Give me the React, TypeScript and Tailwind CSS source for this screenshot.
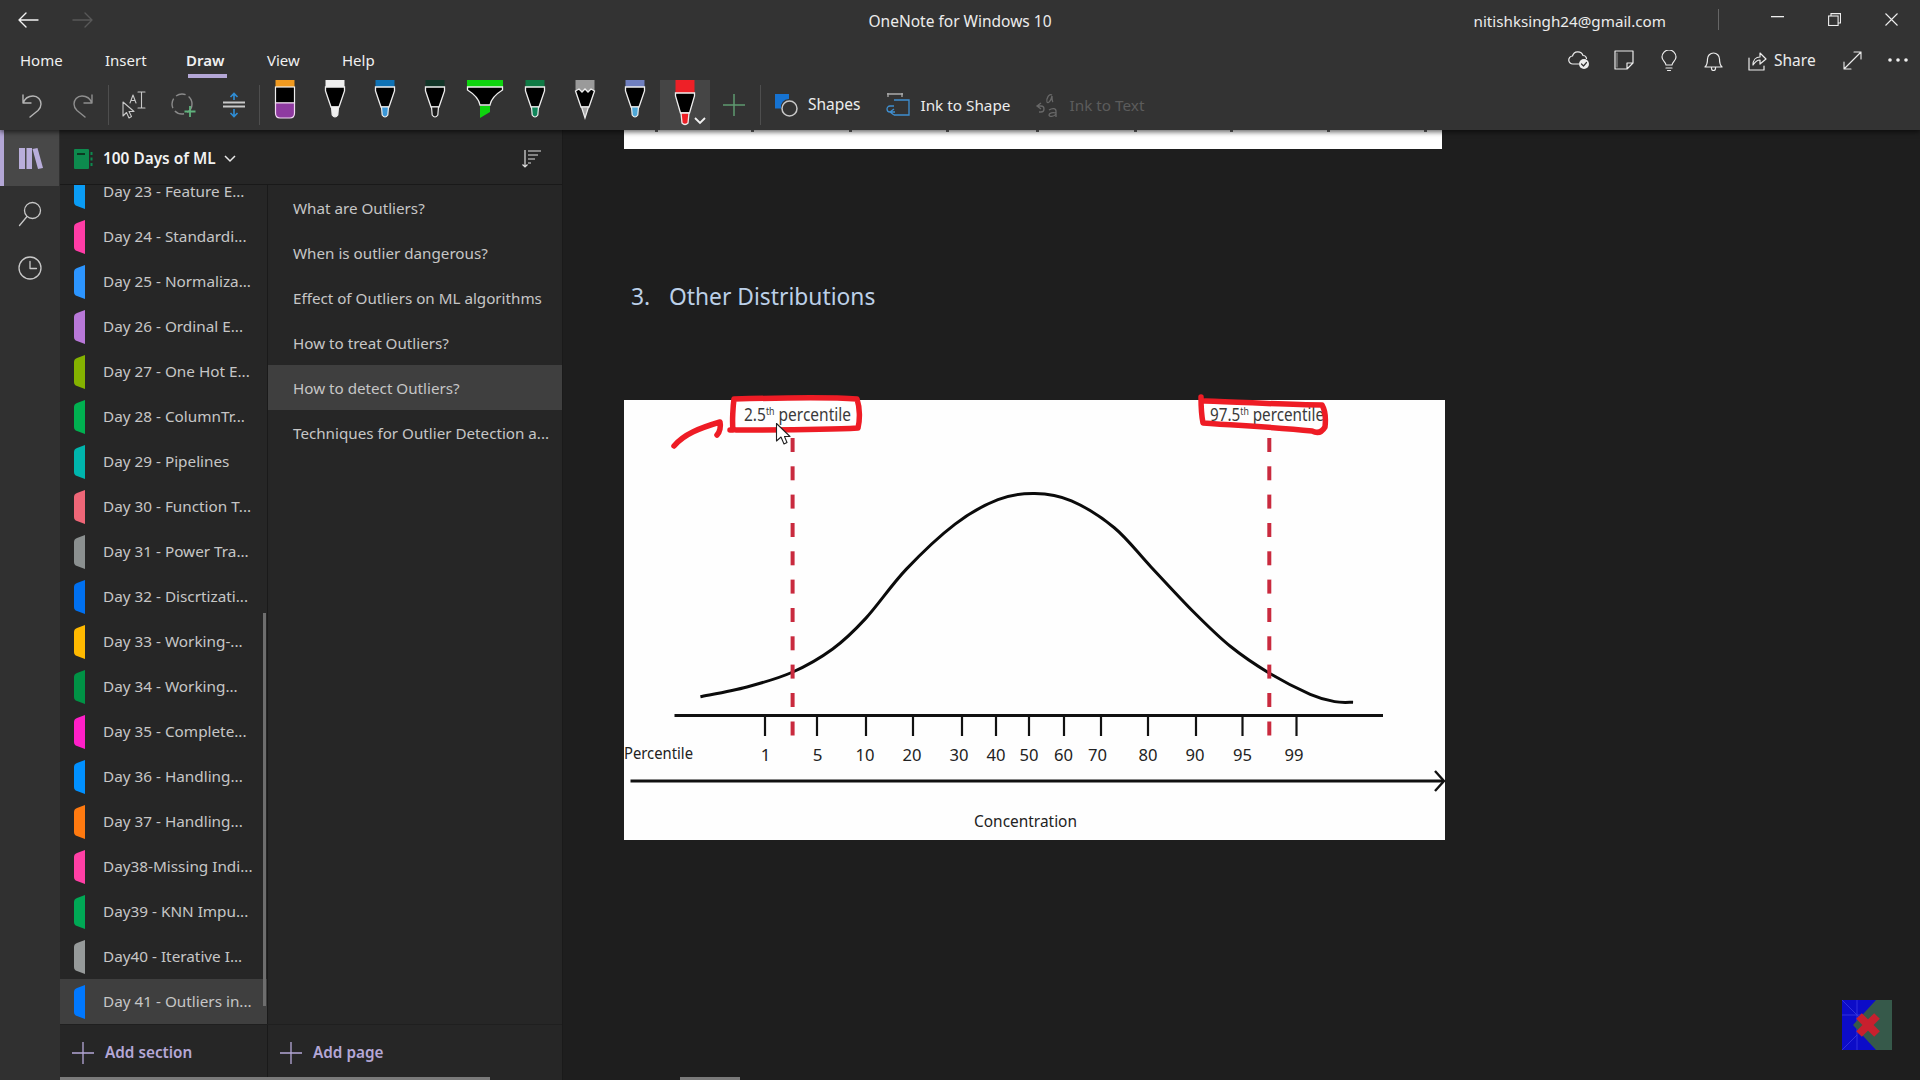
import React from "react";

const sections: [string, string][] = [
  ["Day 23 - Feature E...", "#0a9cf5"],
  ["Day 24 - Standardi...", "#ff3ca6"],
  ["Day 25 - Normaliza...", "#2c95ff"],
  ["Day 26 - Ordinal E...", "#b878d8"],
  ["Day 27 - One Hot E...", "#84b200"],
  ["Day 28 - ColumnTr...", "#00b050"],
  ["Day 29 - Pipelines", "#00b5ad"],
  ["Day 30 - Function T...", "#ee6677"],
  ["Day 31 - Power Tra...", "#8b9090"],
  ["Day 32 - Discrtizati...", "#0070f0"],
  ["Day 33 - Working-...", "#ffb900"],
  ["Day 34 - Working...", "#009245"],
  ["Day 35 - Complete...", "#ff1fc8"],
  ["Day 36 - Handling...", "#0090ff"],
  ["Day 37 - Handling...", "#ff7a10"],
  ["Day38-Missing Indi...", "#ff3fa5"],
  ["Day39 - KNN Impu...", "#00a855"],
  ["Day40 - Iterative I...", "#969a9a"],
  ["Day 41 - Outliers in...", "#0078ff"],
];

const pages = [
  "What are Outliers?",
  "When is outlier dangerous?",
  "Effect of Outliers on ML algorithms",
  "How to treat Outliers?",
  "How to detect Outliers?",
  "Techniques for Outlier Detection a...",
];

function smooth(p: number[][]) {
  let d = `M${p[0][0]} ${p[0][1]}`;
  for (let i = 0; i < p.length - 1; i++) {
    const a = p[Math.max(0, i - 1)], b = p[i], c = p[i + 1], e = p[Math.min(p.length - 1, i + 2)];
    d += ` C${b[0] + (c[0] - a[0]) / 6} ${b[1] + (c[1] - a[1]) / 6} ${c[0] - (e[0] - b[0]) / 6} ${c[1] - (e[1] - b[1]) / 6} ${c[0]} ${c[1]}`;
  }
  return d;
}

const curve = [
  [572, 569], [610, 561], [647, 549], [680, 530], [707, 505], [740, 465], [780, 428], [815, 408], [845, 403],
  [875, 409], [910, 431], [940, 463], [975, 500], [1005, 528], [1037, 550], [1070, 567], [1090, 573], [1105, 573.500],
].map(([x, y]) => [x * 1.2245 - 624, y * 1.2245 - 400]);

const ticks = [765, 817, 866, 913, 962, 996, 1029, 1064, 1101, 1148, 1196, 1242.5, 1296.5];
const labels: [string, number][] = [["1", 765.6], ["5", 817.5], ["10", 865], ["20", 912], ["30", 959], ["40", 996], ["50", 1029], ["60", 1063.6], ["70", 1097.5], ["80", 1148], ["90", 1195], ["95", 1242.5], ["99", 1294]];
const dashes = [38, 66.3, 94.6, 123, 151.3, 179.6, 208, 236.3, 264.6, 293, 321.5];

function Chart() {
  const font = "'Noto Sans', sans-serif";
  return (
    <svg width="821" height="440" viewBox="0 0 821 440" className="block overflow-visible">
      <rect x="0" y="0" width="821" height="440" fill="#fefefe" />
      <path d={smooth(curve)} fill="none" stroke="#0b0b0b" strokeWidth="3" />
      <line x1="50.5" y1="315.500" x2="759" y2="315.500" stroke="#111" strokeWidth="3" />
      {ticks.map((t) => (
        <line key={t} x1={t - 624} y1="315" x2={t - 624} y2="336" stroke="#111" strokeWidth="2.2" />
      ))}
      {[168.6, 645.3].map((x) =>
        dashes.map((d) => <line key={`${x}-${d}`} x1={x} y1={d} x2={x} y2={d + 14} stroke="#c92a3e" strokeWidth="4" />)
      )}
      {labels.map(([l, x]) => (
        <text key={l} x={x - 624} y="361" textAnchor="middle" fontFamily={font} fontSize="17" fill="#222" textLength={l.length === 2 ? 19 : undefined} lengthAdjust="spacingAndGlyphs">
          {l}
        </text>
      ))}
      <text x="0" y="359" fontFamily={font} fontSize="17" fill="#222" textLength="69" lengthAdjust="spacingAndGlyphs">Percentile</text>
      <text x="350" y="427" fontFamily={font} fontSize="17" fill="#222" textLength="103" lengthAdjust="spacingAndGlyphs">Concentration</text>
      <line x1="6.5" y1="381" x2="819" y2="381" stroke="#111" strokeWidth="2.8" />
      <path d="M811 371 L820 381 L811 391" fill="none" stroke="#111" strokeWidth="2.4" />
      <text x="120" y="21" fontFamily={font} fontSize="17.500" fill="#3a3a3a" textLength="107" lengthAdjust="spacingAndGlyphs">
        2.5<tspan fontSize="10" dy="-6">th</tspan><tspan dy="6"> percentile</tspan>
      </text>
      <text x="586" y="21" fontFamily={font} fontSize="17.500" fill="#3a3a3a" textLength="114" lengthAdjust="spacingAndGlyphs">
        97.5<tspan fontSize="10" dy="-6">th</tspan><tspan dy="6"> percentile</tspan>
      </text>
      <g fill="none" stroke="#ee1c25" strokeWidth="5.500" strokeLinecap="round" strokeLinejoin="round">
        <path d="M106 30 H109 C108 22 109 6 110 -1 C150 -2 205 -3 233 -1 C236 8 236 20 234 28 C200 30 150 30 112 30" />
        <path d="M50 46 C60 34 76 28 96 22 C97 26 96 32 93 35" />
        <path d="M577 -3 C577 8 578 18 579 23 C620 26 650 27 688 31 C694 34 698 32 701 27 C702 18 701 10 698 5 C660 5 620 2 581 1" />
      </g>
      <path d="M152.500 23.500 V41 L157 37 L160 44 L163 42.500 L160.500 36.500 H166 Z" fill="#fff" stroke="#222" strokeWidth="1.100" strokeLinejoin="round" />
    </svg>
  );
}

const s = { fill: "none", stroke: "currentColor", strokeWidth: 1.4, strokeLinecap: "round", strokeLinejoin: "round" } as const;

function Pen({ top, tip, kind = "pen" }: { top: string; tip: string; kind?: "pen" | "pencil" | "hl" | "marker" | "big" }) {
  let inner: React.ReactNode;
  if (kind === "marker") {
    inner = (
      <>
        <rect x="15.500" y="0" width="19" height="7" fill={top} />
        <rect x="15.500" y="7" width="19" height="16" fill="#000" stroke="#eee" strokeWidth="1.200" />
        <path d="M15.500 23 H34.500 V33 Q34.500 38 30 38 H20 Q15.500 38 15.500 33 Z" fill={tip} stroke="#f3d9f3" strokeWidth="1.200" />
      </>
    );
  } else if (kind === "hl") {
    inner = (
      <>
        <rect x="7" y="0" width="36" height="7" fill={top} />
        <path d="M7.500 7 H42.500 V10 C36 14 31 19 30 25 H20 C19 19 14 14 7.500 10 Z" fill="#000" stroke="#eee" strokeWidth="1.300" />
        <path d="M20 26 H30 V32 L20 38 Z" fill={tip} />
      </>
    );
  } else if (kind === "big") {
    inner = (
      <>
        <rect x="15.500" y="0" width="19" height="13" fill={top} />
        <path d="M15.500 13 H34.500 V16 L29.500 33 H20.500 L15.500 16 Z" fill="#000" stroke="#eee" strokeWidth="1.300" />
        <path d="M21 33 H29 L28 43 Q25 46 22 43 Z" fill={tip} stroke="#eee" strokeWidth="1.300" />
      </>
    );
  } else {
    inner = (
      <>
        <rect x="15.500" y="0" width="19" height="7" fill={top} />
        {kind === "pencil" ? <path d="M15.500 7 V11 L19 9 L22 12 L25 9 L28 12 L31 9 L34.500 11 V7 Z" fill={top} /> : null}
        <path
          d={kind === "pencil" ? "M15.500 11 L19 9 L22 12 L25 9 L28 12 L31 9 L34.500 11 L29 27 H21 Z" : "M15.500 7 H34.500 V11 L29 27 H21 L15.500 11 Z"}
          fill="#000"
          stroke="#eee"
          strokeWidth="1.300"
        />
        <path d={kind === "pencil" ? "M21.500 27 H28.500 L25 38 Z" : "M21.500 27 H28.500 L27.800 35 Q25 39 22.200 35 Z"} fill={tip} stroke="#eee" strokeWidth="1.200" />
      </>
    );
  }
  return (
    <svg width="50" height="50" viewBox="0 0 50 50" className="block shrink-0">
      {inner}
    </svg>
  );
}

function Tab({ color }: { color: string }) {
  return (
    <svg width="11" height="34" viewBox="0 0 11 34" className="shrink-0">
      <path d="M11 0 V34 L3 31 Q0 30 0 27 V7 Q0 4 3 3 Z" fill={color} />
    </svg>
  );
}

function Sep() {
  return <div className="w-px h-[40px] bg-[#4e4e4e] shrink-0" />;
}

export default function App() {
  return (
    <div className="relative w-[1920px] h-[1080px] overflow-hidden flex flex-col bg-[#1e1e1e] text-[#e8e8e8] font-['Noto_Sans',sans-serif]">
      <header className="relative z-10 h-[130px] shrink-0 bg-[#333333] shadow-[0_2px_5px_rgba(0,0,0,0.6)]">
        <div className="h-[40px] grid grid-cols-[1fr_auto_1fr] items-center">
          <div className="flex items-center pl-[17px] gap-[33px]">
            <svg width="22" height="18" viewBox="0 0 22 18" {...s} className="text-[#f2f2f2]"><path d="M21 9H2M9 2L2 9l7 7" /></svg>
            <svg width="22" height="18" viewBox="0 0 22 18" {...s} className="text-[#585858]"><path d="M1 9h19M13 2l7 7-7 7" /></svg>
          </div>
          <div className="text-[15.5px] text-[#ececec] pt-[3px]">OneNote for Windows 10</div>
          <div className="flex items-center justify-end">
            <span className="text-[15.2px] text-[#ececec] pt-[3px]">nitishksingh24@gmail.com</span>
            <div className="w-px h-[21px] bg-[#666] ml-[52px] mr-[30px]" />
            <div className="w-[57px] flex justify-center pb-[5px]"><svg width="13" height="2" className="text-[#eee]"><rect width="13" height="1.300" fill="currentColor" /></svg></div>
            <div className="w-[57px] flex justify-center pb-[1px]"><svg width="13" height="13" viewBox="0 0 13 13" fill="none" stroke="#eee" strokeWidth="1.100"><rect x="0.600" y="3" width="9.500" height="9.500" /><path d="M3 3V.6h9.500V10H10" /></svg></div>
            <div className="w-[57px] flex justify-center pb-[1px]"><svg width="13" height="13" viewBox="0 0 13 13" fill="none" stroke="#eee" strokeWidth="1.100"><path d="M.5.5l12 12M12.500.5l-12 12" /></svg></div>
          </div>
        </div>

        <div className="h-[40px] flex items-center justify-between">
          <nav className="flex items-center pl-[20px] text-[15px] text-[#f0f0f0]">
            <div className="w-[85px]">Home</div>
            <div className="w-[81px]">Insert</div>
            <div className="w-[81px] relative font-semibold">
              Draw
              <div className="absolute left-[2px] top-[25px] w-[39px] h-[4px] bg-[#b4a7d6]" />
            </div>
            <div className="w-[75px]">View</div>
            <div>Help</div>
          </nav>
          <div className="flex items-center text-[#ececec]">
            <div className="w-[45px] flex justify-center">
              <svg width="22" height="20" viewBox="0 0 22 20" {...s} strokeWidth={1.2}>
                <path d="M12 14H5a4 4 0 0 1-.5-8A5.500 5.500 0 0 1 15 5.500a3.500 3.500 0 0 1 3.500 3" />
                <circle cx="16" cy="14" r="5" fill="#ececec" stroke="none" />
                <path d="M13.500 14l2 2 3-3.500" stroke="#333" />
              </svg>
            </div>
            <div className="w-[45px] flex justify-center">
              <svg width="20" height="20" viewBox="0 0 20 20" {...s} strokeWidth={1.2}>
                <path d="M1 1h18v12l-6 6H1zM19 13h-6v6" />
                <path d="M3 3v14" opacity="0.500" />
              </svg>
            </div>
            <div className="w-[45px] flex justify-center">
              <svg width="16" height="21" viewBox="0 0 16 21" {...s} strokeWidth={1.2}>
                <path d="M5 15c0-3-4-4-4-8a7 7 0 0 1 14 0c0 4-4 5-4 8zM5 18h6M6.500 20.500h3" />
              </svg>
            </div>
            <div className="w-[45px] flex justify-center">
              <svg width="19" height="21" viewBox="0 0 19 21" {...s} strokeWidth={1.2}>
                <path d="M1 17c2-2 2.500-4 2.500-8a6 6 0 0 1 12 0c0 4 .5 6 2.500 8zM7.500 17.500v1a2 2 0 0 0 4 0v-1" />
              </svg>
            </div>
            <div className="w-[94px] flex items-center pl-[12px]">
              <svg width="19" height="21" viewBox="0 0 19 21" {...s} strokeWidth={1.2}>
                <path d="M1 8v12h15v-4M5 15c0-5 3-8 7-8V3l6 6-6 5v-4c-3 0-5 2-7 5z" />
              </svg>
              <span className="ml-[7px] text-[15.5px] pt-[1px]">Share</span>
            </div>
            <div className="w-[45px] flex justify-center">
              <svg width="19" height="19" viewBox="0 0 19 19" {...s} strokeWidth={1.1}>
                <path d="M1 18L18 1M11 1h7v7M1 11v7h7" />
              </svg>
            </div>
            <div className="w-[45px] flex justify-center">
              <svg width="20" height="4" viewBox="0 0 20 4" fill="#f0f0f0"><circle cx="2" cy="2" r="1.800" /><circle cx="10" cy="2" r="1.800" /><circle cx="18" cy="2" r="1.800" /></svg>
            </div>
          </div>
        </div>

        <div className="h-[50px] flex items-center pl-[7px]">
          <div className="w-[50px] flex justify-center text-[#b5b5b5]">
            <svg width="22" height="25" viewBox="0 0 22 25" {...s}><path d="M2 2v8h8M2 10c2-5 6-7 10-7 5 0 8 4 8 8 0 3-1.500 5-3 6.500L9 24" /></svg>
          </div>
          <div className="w-[51px] flex justify-center text-[#8f8f8f]">
            <svg width="22" height="25" viewBox="0 0 22 25" {...s}><path d="M20 2v8h-8M20 10c-2-5-6-7-10-7-5 0-8 4-8 8 0 3 1.500 5 3 6.500L13 24" /></svg>
          </div>
          <Sep />
          <div className="w-[50px] flex justify-center text-[#c8c8c8]">
            <svg width="26" height="28" viewBox="0 0 26 28" {...s} strokeWidth={1.1}>
              <path d="M2 11v14l3.500-3.500L8 27l2.500-1.500L8 20.500h5z" />
              <path d="M9 12l3-8 3 8M10 9.500h4" />
              <path d="M17 1h7M17 17h7M20.500 1v16" />
            </svg>
          </div>
          <div className="w-[50px] flex justify-center">
            <svg width="26" height="26" viewBox="0 0 26 26" fill="none">
              <circle cx="11" cy="12" r="10" stroke="#8a8a8a" strokeWidth="1.400" strokeDasharray="10 3.500" />
              <path d="M19 14v11M13.500 19.500h11" stroke="#5fb27c" strokeWidth="1.800" />
            </svg>
          </div>
          <div className="w-[50px] flex justify-center">
            <svg width="24" height="26" viewBox="0 0 24 26" fill="none">
              <path d="M1 10.500h22M1 14.500h22" stroke="#c8c8c8" strokeWidth="2" />
              <path d="M12 2v6M8.500 5L12 1.500 15.500 5M12 17v7M8.500 21L12 24.500 15.500 21" stroke="#2f8ed6" strokeWidth="1.600" />
            </svg>
          </div>
          <Sep />
          <div className="self-start flex">
            <Pen top="#f09a20" tip="#8e3aa0" kind="marker" />
            <Pen top="#efefef" tip="#efefef" />
            <Pen top="#0f72b5" tip="#3a97d8" />
            <Pen top="#123528" tip="#1a1a1a" />
            <Pen top="#0fd40f" tip="#0fd40f" kind="hl" />
            <Pen top="#0f7a45" tip="#10855a" />
            <Pen top="#9a9a9a" tip="#aaaaaa" kind="pencil" />
            <Pen top="#6f7fc0" tip="#4fa8d8" />
            <div className="relative w-[50px] h-[50px] bg-[#454545]">
              <Pen top="#ee2027" tip="#ee2027" kind="big" />
              <svg width="12" height="8" viewBox="0 0 12 8" className="absolute left-[34px] top-[37px]" fill="none" stroke="#f2f2f2" strokeWidth="1.800"><path d="M1 1l5 5 5-5" /></svg>
            </div>
          </div>
          <div className="w-[48px] flex justify-center">
            <svg width="22" height="22" viewBox="0 0 22 22" stroke="#5f9a70" strokeWidth="1.500"><path d="M11 0v22M0 11h22" /></svg>
          </div>
          <div className="ml-[2px]"><Sep /></div>
          <div className="ml-[13px] flex items-center">
            <svg width="24" height="24" viewBox="0 0 24 24" fill="none">
              <path d="M1 1h14v5a8 8 0 0 0-8 9.500H1z" fill="#1673d2" />
              <circle cx="15.500" cy="15.500" r="7.500" stroke="#c8c8c8" strokeWidth="1.500" />
            </svg>
            <span className="ml-[10px] text-[15.5px] text-[#ececec]">Shapes</span>
          </div>
          <div className="ml-[26px] flex items-center">
            <svg width="24" height="26" viewBox="0 0 24 26" fill="none" strokeWidth="1.300">
              <path d="M1 2h16M2 1v4M16 1v4" stroke="#aaa" />
              <path d="M8 8h15v15H8" stroke="#3f8fd0" />
              <path d="M8 14H4a3 3 0 0 0 0 6h5M8 17l-4 3 4 3" stroke="#3f8fd0" />
            </svg>
            <span className="ml-[10px] text-[15.3px] text-[#ececec]">Ink to Shape</span>
          </div>
          <div className="ml-[24px] flex items-center">
            <svg width="24" height="26" viewBox="0 0 24 26" fill="none" stroke="#686868" strokeWidth="1.300">
              <path d="M17 3c-3-2-6 4-5 7 1 2 4-1 5-6 0 3 0 5 1 6" />
              <path d="M6 11l-4 3 4 3M2 14h4a2 2 0 0 1 0 6H4" />
              <path d="M14 18c3-2 7-2 7 1v6M21 21c-3-1-7 0-7 2s5 2 7-1" />
            </svg>
            <span className="ml-[11px] text-[15.3px] text-[#5c5c5c]">Ink to Text</span>
          </div>
        </div>
      </header>

      <main className="flex-1 flex min-h-0">
        <aside className="w-[60px] shrink-0 bg-[#303030] flex flex-col text-[#c8c8c8]">
          <div className="relative h-[56px] bg-[#484848] w-[59px] flex items-center justify-center border-l-[4px] border-[#b4a7d6] pr-[2px]">
            <svg width="24" height="21" viewBox="0 0 24 21" fill="#b9aedb"><rect x="0" y="0" width="6" height="21" /><rect x="7.500" y="0" width="5.500" height="21" /><path d="M13.500 1l5-1L24 20l-5 1z" /></svg>
          </div>
          <div className="h-[55px] flex items-center justify-center">
            <svg width="24" height="26" viewBox="0 0 24 26" {...s} strokeWidth={1.300}><circle cx="14.500" cy="9.500" r="8" /><path d="M9 15.500L1.500 24.500" /></svg>
          </div>
          <div className="h-[54px] flex items-center justify-center">
            <svg width="24" height="24" viewBox="0 0 24 24" {...s} strokeWidth={1.300}><circle cx="12" cy="12" r="11" /><path d="M12 5.500V12.500H18.500" /></svg>
          </div>
        </aside>

        <section className="relative w-[503px] shrink-0 flex flex-col bg-[#262626] border-r border-[#1a1a1a]">
          <div className="h-[55px] shrink-0 flex items-center border-b border-[#191919] pl-[13px] pr-[20px] pt-[4px]">
            <svg width="20" height="20" viewBox="0 0 20 20" className="shrink-0">
              <path d="M1 1a1 1 0 0 1 1-1h13a1 1 0 0 1 1 1v18a1 1 0 0 1-1 1H2a1 1 0 0 1-1-1z" fill="#0d8a4e" />
              <rect x="4" y="4" width="8" height="2" fill="#0c3a22" />
              <path d="M17.500 3h2v3h-2zM17.500 8.500h2v3h-2zM17.500 14h2v3h-2z" fill="#0d8a4e" />
            </svg>
            <span className="ml-[10px] text-[15.4px] font-semibold text-[#f2f2f2]">100 Days of ML</span>
            <svg width="12" height="8" viewBox="0 0 12 8" fill="none" stroke="#e8e8e8" strokeWidth="1.500" className="ml-[8px]"><path d="M1 1l5 5 5-5" /></svg>
            <svg width="20" height="20" viewBox="0 0 20 20" fill="none" stroke="#e0e0e0" strokeWidth="1.200" className="ml-auto"><path d="M3 1v17M.5 15.500L3 18l2.500-2.500M6 2h13M6 6h10M6 10h7M6 14h3" /></svg>
          </div>

          <div className="flex-1 min-h-0 flex">
            <div className="w-[208px] shrink-0 overflow-hidden border-r border-[#1a1a1a]">
              <div className="-mt-[16px]">
                {sections.map(([name, color], i) => (
                  <div key={name} className={`h-[45px] flex items-center pl-[14px] ${i === 18 ? "bg-[#3f3f3f]" : ""}`}>
                    <Tab color={color} />
                    <span className="ml-[18px] whitespace-nowrap text-[15.3px] text-[#c6c6c6]">{name}</span>
                  </div>
                ))}
              </div>
            </div>
            <div className="flex-1">
              {pages.map((p, i) => (
                <div key={p} className={`h-[45px] flex items-center pl-[25px] pt-[1px] whitespace-nowrap text-[15.2px] text-[#c6c6c6] ${i === 4 ? "bg-[#3f3f3f]" : ""}`}>
                  {p}
                </div>
              ))}
            </div>
          </div>

          <div className="h-[56px] shrink-0 flex text-[#b4a7d6] font-semibold text-[15.3px] border-t border-[#1f1f1f]">
            <div className="w-[208px] flex items-center pl-[12px] border-r border-[#1a1a1a]">
              <svg width="22" height="22" viewBox="0 0 22 22" stroke="#b4a7d6" strokeWidth="1.300"><path d="M11 0v22M0 11h22" /></svg>
              <span className="ml-[11px]">Add section</span>
            </div>
            <div className="flex-1 flex items-center pl-[12px]">
              <svg width="22" height="22" viewBox="0 0 22 22" stroke="#b4a7d6" strokeWidth="1.300"><path d="M11 0v22M0 11h22" /></svg>
              <span className="ml-[11px]">Add page</span>
            </div>
          </div>
        </section>

        <div className="relative flex-1 pl-[61px] min-w-0 bg-[#1e1e1e]">
          <div className="relative w-[818px] h-[19px] bg-white">
            <svg width="818" height="4" className="block">
              {[31, 127, 225, 322, 412, 510, 606, 703, 800].map((x) => <rect key={x} x={x} y="0" width="3" height="2" fill="#666" />)}
            </svg>
          </div>
          <div className="mt-[131px] flex items-center pl-[7px] h-[34px] text-[22.8px] text-[#bcd0e8]">
            <span className="w-[38px]">3.</span>
            <span>Other Distributions</span>
          </div>
          <div className="mt-[86px]">
            <Chart />
          </div>
        </div>
      </main>

      <div className="absolute left-[263px] top-[613px] w-[3px] h-[393px] bg-[#6e6e6e]" />
      <div className="absolute left-[60px] top-[1077px] w-[430px] h-[3px] bg-[#7a7a7a]" />
      <div className="absolute left-[680px] top-[1077px] w-[60px] h-[3px] bg-[#7a7a7a]" />
      <div className="absolute left-[1842px] top-[1000px] w-[50px] h-[50px] bg-[#0c0cc8]">
        <svg width="50" height="50" viewBox="0 0 50 50" className="block">
          <path d="M0 0L50 50M0 50L15 35M15 0V50M0 15H25" stroke="#3a3adf" strokeWidth="0.800" />
          <path d="M34 0H50V50H34L11 25Z" fill="#36594a" />
          <path d="M17 16L35 34M35 16L17 34" stroke="#c8202e" strokeWidth="8" />
        </svg>
      </div>
    </div>
  );
}
